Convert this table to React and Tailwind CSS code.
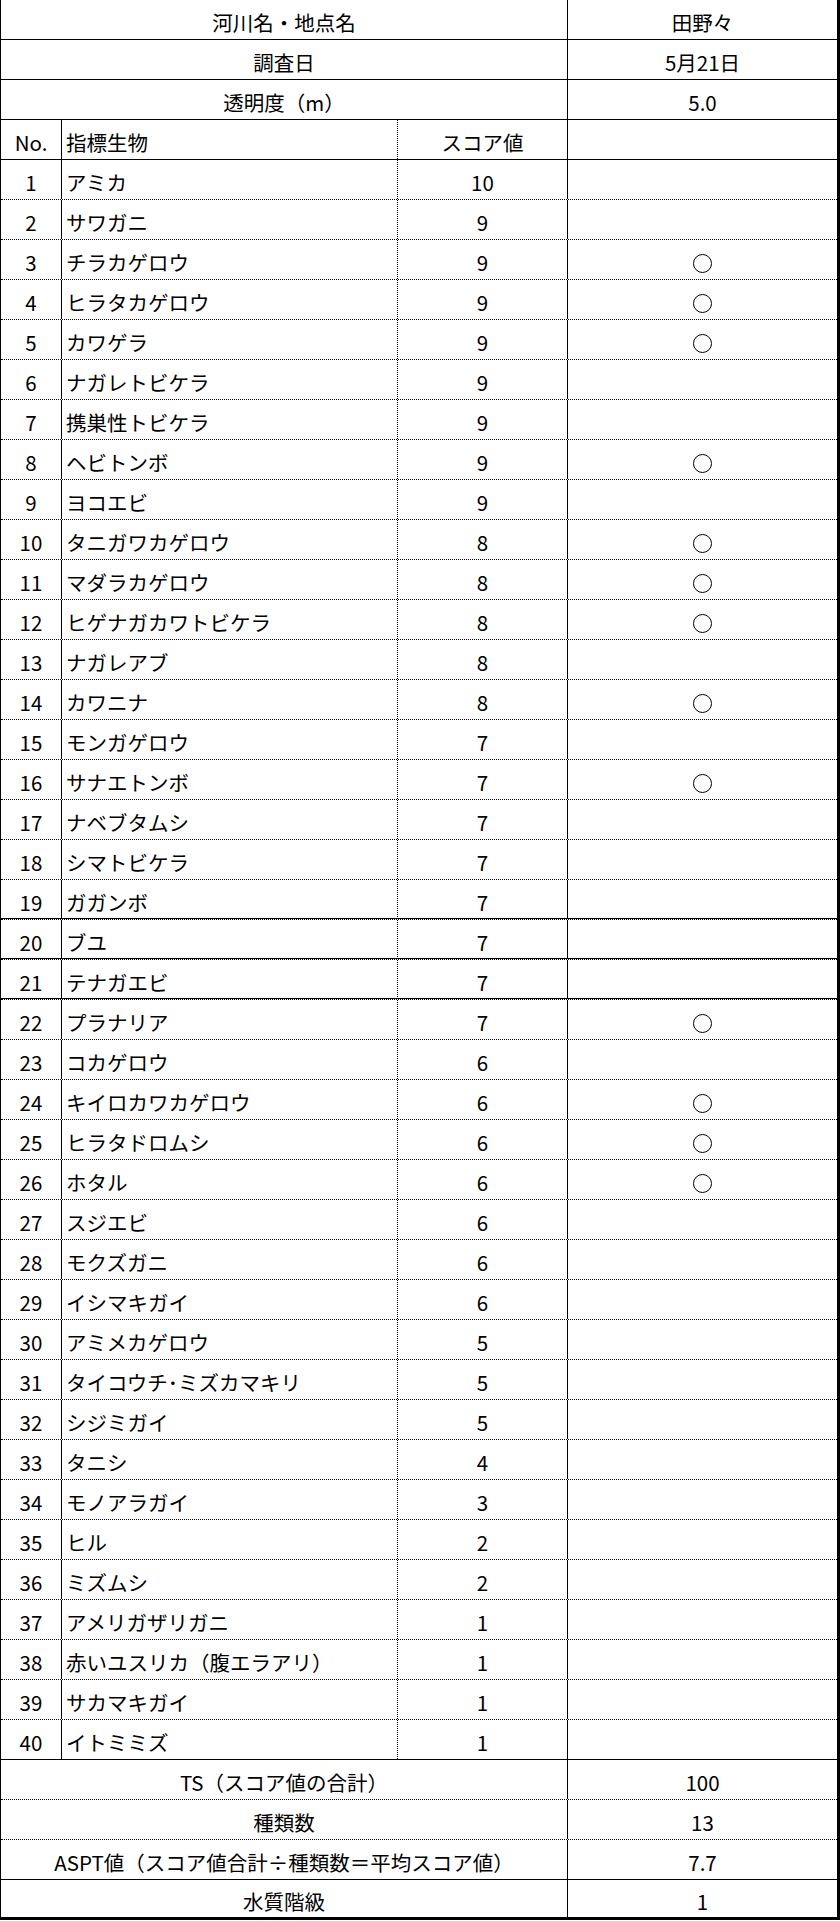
import React from 'react';

// 指標生物 list: [name, score, found]
const items = [
  ['アミカ', 10, false],
  ['サワガニ', 9, false],
  ['チラカゲロウ', 9, true],
  ['ヒラタカゲロウ', 9, true],
  ['カワゲラ', 9, true],
  ['ナガレトビケラ', 9, false],
  ['携巣性トビケラ', 9, false],
  ['ヘビトンボ', 9, true],
  ['ヨコエビ', 9, false],
  ['タニガワカゲロウ', 8, true],
  ['マダラカゲロウ', 8, true],
  ['ヒゲナガカワトビケラ', 8, true],
  ['ナガレアブ', 8, false],
  ['カワニナ', 8, true],
  ['モンガゲロウ', 7, false],
  ['サナエトンボ', 7, true],
  ['ナベブタムシ', 7, false],
  ['シマトビケラ', 7, false],
  ['ガガンボ', 7, false],
  ['ブユ', 7, false],
  ['テナガエビ', 7, false],
  ['プラナリア', 7, true],
  ['コカゲロウ', 6, false],
  ['キイロカワカゲロウ', 6, true],
  ['ヒラタドロムシ', 6, true],
  ['ホタル', 6, true],
  ['スジエビ', 6, false],
  ['モクズガニ', 6, false],
  ['イシマキガイ', 6, false],
  ['アミメカゲロウ', 5, false],
  ['タイコウチ･ミズカマキリ', 5, false],
  ['シジミガイ', 5, false],
  ['タニシ', 4, false],
  ['モノアラガイ', 3, false],
  ['ヒル', 2, false],
  ['ミズムシ', 2, false],
  ['アメリガザリガニ', 1, false],
  ['赤いユスリカ（腹エラアリ）', 1, false],
  ['サカマキガイ', 1, false],
  ['イトミミズ', 1, false],
];

const lineClass = {
  solid: 'border-b border-solid border-black',
  dotted: 'border-b border-dotted border-black',
  double: 'border-b border-dotted border-black shadow-[inset_0_-1px_0_#000]',
  thick: 'border-b-[3px] border-solid border-black',
};

const Circle = () => (
  <span className="block w-[19px] h-[19px] rounded-full border-[1.5px] border-black" />
);

const Cell = ({ className = '', children }) => (
  <div className={`h-full flex items-center pt-[6px] ${className}`}>{children}</div>
);

const SummaryRow = ({ label, value, line }) => (
  <div className={`flex h-[40px] ${lineClass[line]}`}>
    <Cell className="w-[567px] justify-center border-r border-black">{label}</Cell>
    <Cell className="flex-1 justify-center">{value}</Cell>
  </div>
);

const ItemRow = ({ no, name, score, found, line }) => (
  <div className={`flex h-[40px] ${lineClass[line]}`}>
    <Cell className="w-[61px] justify-center border-r border-black">{no}</Cell>
    <Cell className="w-[336px] pl-[4px] border-r border-dotted border-black">{name}</Cell>
    <Cell className="w-[170px] justify-center border-r border-black">{score}</Cell>
    <Cell className="flex-1 justify-center pt-[7px]">{found && <Circle />}</Cell>
  </div>
);

const aspt = (
  <span>
    ASPT値（スコア値合計<span className="inline-block w-[1em] text-center">÷</span>種類数＝平均スコア値）
  </span>
);

export default function App() {
  return (
    <div className="w-[840px] bg-white text-black text-[20.5px] leading-none font-['Noto_Sans_CJK_JP',sans-serif]">
      <div className="border-l border-r-[3px] border-black">
        <SummaryRow label="河川名・地点名" value="田野々" line="solid" />
        <SummaryRow label="調査日" value="5月21日" line="solid" />
        <SummaryRow label="透明度（m）" value="5.0" line="solid" />
        <ItemRow no="No." name="指標生物" score="スコア値" line="solid" />
        {items.map(([name, score, found], i) => {
          const no = i + 1;
          let line = 'dotted';
          if (no >= 19 && no <= 21) line = 'double';
          if (no === 40) line = 'solid';
          return <ItemRow key={no} no={no} name={name} score={score} found={found} line={line} />;
        })}
        <SummaryRow label="TS（スコア値の合計）" value="100" line="dotted" />
        <SummaryRow label="種類数" value="13" line="dotted" />
        <SummaryRow label={aspt} value="7.7" line="solid" />
        <SummaryRow label="水質階級" value="1" line="thick" />
      </div>
    </div>
  );
}
